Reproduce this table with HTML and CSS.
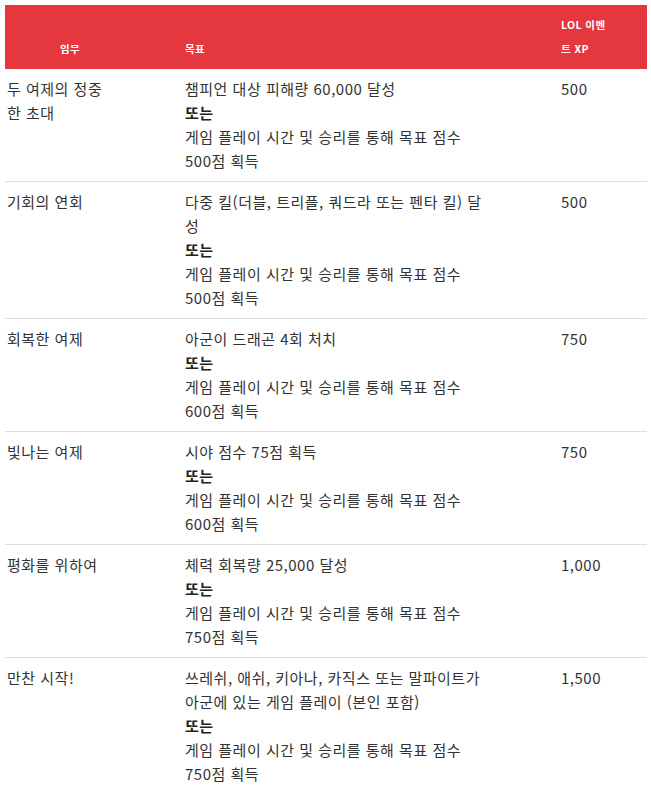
FILE: index.html
```html
<!DOCTYPE html>
<html lang="ko">
<head>
<meta charset="utf-8">
<title>LOL 이벤트 임무</title>
<link rel="stylesheet" href="styles.css">
</head>
<body>
<div class="page">
<table class="missions">
  <colgroup>
    <col class="c-name">
    <col class="c-goal">
    <col class="c-xp">
  </colgroup>
  <thead>
    <tr>
      <th class="th-name">임무</th>
      <th class="th-goal">목표</th>
      <th class="th-xp">LOL 이벤트 XP</th>
    </tr>
  </thead>
  <tbody>
    <tr>
      <td>두 여제의 정중한 초대</td>
      <td>챔피언 대상 피해량 60,000 달성<br><strong>또는</strong><br>게임 플레이 시간 및 승리를 통해 목표 점수 500점 획득</td>
      <td>500</td>
    </tr>
    <tr>
      <td>기회의 연회</td>
      <td>다중 킬(더블, 트리플, 쿼드라 또는 펜타 킬) 달성<br><strong>또는</strong><br>게임 플레이 시간 및 승리를 통해 목표 점수 500점 획득</td>
      <td>500</td>
    </tr>
    <tr>
      <td>회복한 여제</td>
      <td>아군이 드래곤 4회 처치<br><strong>또는</strong><br>게임 플레이 시간 및 승리를 통해 목표 점수 600점 획득</td>
      <td>750</td>
    </tr>
    <tr>
      <td>빛나는 여제</td>
      <td>시야 점수 75점 획득<br><strong>또는</strong><br>게임 플레이 시간 및 승리를 통해 목표 점수 600점 획득</td>
      <td>750</td>
    </tr>
    <tr>
      <td>평화를 위하여</td>
      <td>체력 회복량 25,000 달성<br><strong>또는</strong><br>게임 플레이 시간 및 승리를 통해 목표 점수 750점 획득</td>
      <td>1,000</td>
    </tr>
    <tr>
      <td>만찬 시작!</td>
      <td>쓰레쉬, 애쉬, 키아나, 카직스 또는 말파이트가 아군에 있는 게임 플레이 (본인 포함)<br><strong>또는</strong><br>게임 플레이 시간 및 승리를 통해 목표 점수 750점 획득</td>
      <td>1,500</td>
    </tr>
  </tbody>
</table>
</div>
</body>
</html>
```

FILE: styles.css
```css
html, body {
  margin: 0;
  padding: 0;
  background: #ffffff;
}

.page {
  padding: 5px 4px 0 5px;
}

.missions {
  width: 642px;
  border-collapse: collapse;
  table-layout: fixed;
  font-family: "Noto Sans CJK KR", "Noto Sans", sans-serif;
  font-size: 15px;
  letter-spacing: 0.5px;
  line-height: 24px;
  color: #333333;
}

.c-name { width: 178px; }
.c-goal { width: 376px; }
.c-xp { width: 88px; }

.missions th {
  background: #e4373e;
  color: #ffffff;
  font-size: 10.5px;
  font-weight: 700;
  letter-spacing: 0.4px;
  line-height: 24px;
  text-align: left;
  vertical-align: bottom;
  padding: 8px 0 8px 2px;
}

.missions .th-name {
  text-align: center;
  padding-right: 50px;
}

.missions .th-goal {
  padding-right: 74px;
}

.missions .th-xp {
  padding-right: 40px;
}

.missions td {
  vertical-align: top;
  padding: 8px 0 8px 2px;
  border-bottom: 1px solid #dddddd;
}

.missions td:nth-child(1) { padding-right: 70px; }
.missions td:nth-child(2) { padding-right: 74px; }
.missions td:nth-child(3) { padding-right: 36px; }

.missions strong {
  font-weight: 700;
  color: #222222;
}
```
